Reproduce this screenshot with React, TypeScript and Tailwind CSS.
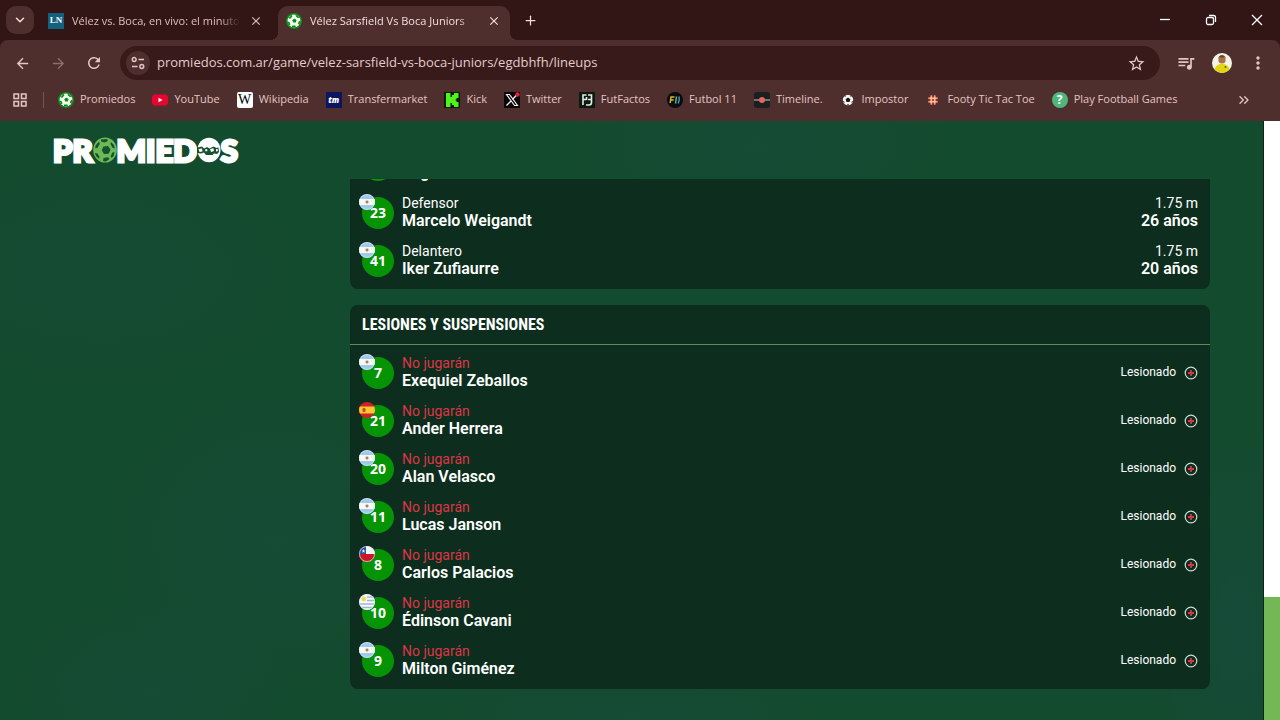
import type { ReactNode } from "react";
import {
  MdArrowBack,
  MdArrowForward,
  MdClose,
  MdMoreVert,
  MdOutlineGridView,
  MdQueueMusic,
  MdRefresh,
  MdStarBorder,
} from "react-icons/md";
import { ChevronDown, ChevronsRight, Plus } from "lucide-react";

type Flag = "ar" | "es" | "cl" | "uy";

interface Player {
  number: number;
  flag: Flag;
  name: string;
}

const substitutes: (Player & { role: string; height: string; age: string })[] = [
  { number: 16, flag: "uy", role: "Delantero", name: "Miguel Merentiel", height: "", age: "" },
  { number: 23, flag: "ar", role: "Defensor", name: "Marcelo Weigandt", height: "1.75 m", age: "26 años" },
  { number: 41, flag: "ar", role: "Delantero", name: "Iker Zufiaurre", height: "1.75 m", age: "20 años" },
];

const injured: Player[] = [
  { number: 7, flag: "ar", name: "Exequiel Zeballos" },
  { number: 21, flag: "es", name: "Ander Herrera" },
  { number: 20, flag: "ar", name: "Alan Velasco" },
  { number: 11, flag: "ar", name: "Lucas Janson" },
  { number: 8, flag: "cl", name: "Carlos Palacios" },
  { number: 10, flag: "uy", name: "Édinson Cavani" },
  { number: 9, flag: "ar", name: "Milton Giménez" },
];

function BallIcon() {
  return (
    <svg viewBox="0 0 16 16" className="size-4 shrink-0" aria-hidden="true">
      <circle cx="8" cy="8" r="8" fill="#11881c" />
      <circle cx="8" cy="8" r="6.4" fill="#f4fff2" />
      <path d="M8.400 5.600 10.600 7 9.800 9.500 7.200 9.600 6.200 7.200Z" fill="#11881c" />
      <path d="M2.600 5 5.800 1.800 6.400 3.600 4 6ZM9.600 1.600l3.800 2.600-1.200 1L9.800 3.600ZM14.600 7.600l-1.200 4.200-1.600-1 1-2.600ZM6 12.400l3.400.1.600 2-4 .1ZM1.500 8.400l2 .6 1 2.600-1.400 1Z" fill="#11881c" />
    </svg>
  );
}

function FlagIcon({ flag }: { flag: Flag }) {
  return (
    <svg viewBox="0 0 16 16" className="size-4 overflow-hidden rounded-full" aria-hidden="true">
      {flag === "ar" && (
        <>
          <rect width="16" height="16" fill="#9fcbea" />
          <rect y="5" width="16" height="6" fill="#f8f8f8" />
          <circle cx="8" cy="8" r="1.7" fill="#c9a66b" />
          <circle cx="8" cy="8" r="0.8" fill="#6b5b4a" />
        </>
      )}
      {flag === "es" && (
        <>
          <rect width="16" height="16" fill="#d0202c" />
          <rect y="4.5" width="16" height="7" fill="#fcc62e" />
          <rect x="3.5" y="6" width="3" height="4" rx="1" fill="#b5532b" />
        </>
      )}
      {flag === "cl" && (
        <>
          <rect width="16" height="16" fill="#f6f6f6" />
          <rect y="8" width="16" height="8" fill="#c8182a" />
          <rect width="7" height="8" fill="#24529b" />
          <path d="m4.500 3 .5 1.400h1.400L5.300 5.300l.4 1.400-1.200-.8-1.200.8.4-1.400L2.600 4.400H4Z" fill="#fff" />
        </>
      )}
      {flag === "uy" && (
        <>
          <rect width="16" height="16" fill="#f6f8fa" />
          <path d="M8 3h8M8 6.500h8M0 10h16M0 13.500h16" stroke="#9cb8d8" strokeWidth="1.500" />
          <circle cx="4.800" cy="5" r="2.400" fill="#f0d95a" />
        </>
      )}
      {flag !== "es" && (
        <circle cx="8" cy="8" r="7.500" fill="none" stroke="#e9eef2" strokeWidth="0.8" opacity="0.8" />
      )}
    </svg>
  );
}

function InjuryIcon() {
  return (
    <svg viewBox="0 0 14 14" className="size-3.5 translate-y-px" aria-hidden="true">
      <circle cx="7" cy="7" r="5.800" fill="none" stroke="#d3dad0" strokeWidth="1.200" />
      <path d="M7 4v6M4 7h6" stroke="#dc3545" strokeWidth="1.800" />
    </svg>
  );
}

function Logo() {
  return (
    <a
      href="#inicio"
      aria-label="Promiedos"
      className="flex h-7 items-center font-['Lato',sans-serif] text-[31px] leading-7 font-black text-white [-webkit-text-stroke:3px_white]"
    >
      <span>PR</span>
      <svg viewBox="0 0 24 26" className="h-[26px] w-6" aria-hidden="true">
        <ellipse cx="12" cy="13" rx="11.800" ry="12.600" fill="#6db955" />
        <g fill="#17512f">
          <path d="m10.500 9.500 4.500-.5 2.500 3.500-1.800 4.200-4.700.3-2.300-3.700Z" />
          <path d="m8 2.500 6-.5 1 2-3.500 1.500L8 4.500ZM18 5l3 3 .8 3.500-2.300-.8L17.500 7ZM2.500 8.500l3.500-4 .8 2.500-2.500 4-2 .5ZM2 16l2.500.5 2 3.500-.5 1.800L3 19ZM10.500 21l4.500-.8 1.500 1.800-3.500 2.500-3-.5ZM21.500 15l-1 4.500-2.200 1.200-.6-1.700 1.800-3.500Z" />
        </g>
      </svg>
      <span>MIED</span>
      <svg viewBox="0 0 24 26" className="h-[26px] w-6" aria-hidden="true">
        <ellipse cx="12" cy="13" rx="11.500" ry="12.200" fill="#fff" />
        <path d="M0 10.500l5-1 2 2 3-1.500 2.500 1.500 4-2 3 1.500 2-.5.5 4.500-2 2-3-.5-1.500 1.500H9L7 15.500l-3 1-4-.5Z" fill="#17512f" />
        <path d="m1.500 12 3.500-.5.500 3-3 .5ZM13 12l3.500-.8.500 2.800-3 1ZM19 12l2 .2-.3 2-1.700.4ZM8 12.500l2-.5.5 2-2 .5Z" fill="#fff" />
      </svg>
      <span>S</span>
    </a>
  );
}

const bookmarks: { label: string; icon: ReactNode }[] = [
  { label: "Promiedos", icon: <BallIcon /> },
  {
    label: "YouTube",
    icon: (
      <svg viewBox="0 0 16 16" className="size-4" aria-hidden="true">
        <rect y="2.500" width="16" height="11" rx="3" fill="#e8052f" />
        <path d="m6.500 5.700 4 2.300-4 2.300Z" fill="#fff" />
      </svg>
    ),
  },
  {
    label: "Wikipedia",
    icon: (
      <span className="flex size-4 items-center justify-center rounded-xs bg-white font-['Liberation_Serif',serif] text-sm leading-4 text-black">
        W
      </span>
    ),
  },
  {
    label: "Transfermarket",
    icon: (
      <span className="flex size-4 items-center justify-center bg-[#0b1560] font-['Open_Sans',sans-serif] text-[8px] leading-none font-extrabold text-white italic">
        tm
      </span>
    ),
  },
  {
    label: "Kick",
    icon: (
      <svg viewBox="0 0 16 16" className="size-4" aria-hidden="true">
        <rect width="16" height="16" fill="#0b1a08" />
        <path d="M2 1h4.500v4H8V3h2V1h4.500v5h-2v1.500h-1v1h1V10h2v5H10v-2H8v-2H6.500v4H2Z" fill="#4ff41c" />
      </svg>
    ),
  },
  {
    label: "Twitter",
    icon: (
      <svg viewBox="0 0 16 16" className="size-4" aria-hidden="true">
        <rect width="16" height="16" fill="#080606" />
        <path d="M2.500 2.500h3l8 11h-3Z" fill="none" stroke="#f2eeee" strokeWidth="1.200" />
        <path d="m13 2.500-4.500 5M7 9l-4.500 4.500" stroke="#f2eeee" strokeWidth="1.300" />
        <circle cx="13.500" cy="2.500" r="2.200" fill="#e01f3d" />
      </svg>
    ),
  },
  {
    label: "FutFactos",
    icon: (
      <svg viewBox="0 0 16 16" className="size-4" aria-hidden="true">
        <rect width="16" height="16" fill="#0d1a12" />
        <path d="M7.500 3H4v10M4 7.500h3.500M9 3h3.500v7.500c0 2-1 2.500-2.500 2.500H7M9 7.500h3.500M7.500 5v3" fill="none" stroke="#e4ece4" strokeWidth="1.600" />
      </svg>
    ),
  },
  {
    label: "Futbol 11",
    icon: (
      <svg viewBox="0 0 16 16" className="size-4" aria-hidden="true">
        <circle cx="8" cy="8" r="8" fill="#0c0c0c" />
        <path d="M7.500 5H4l-.8 6M3.700 8h3" fill="none" stroke="#d8b23a" strokeWidth="1.500" />
        <path d="m9.500 4.500-1 7" stroke="#63b96a" strokeWidth="1.500" />
        <path d="M12 4.500c.6 3 .2 5-.8 7" fill="none" stroke="#3f94cf" strokeWidth="1.500" />
      </svg>
    ),
  },
  {
    label: "Timeline.",
    icon: (
      <svg viewBox="0 0 16 16" className="size-4" aria-hidden="true">
        <rect width="16" height="16" rx="2.500" fill="#1c1f20" />
        <path d="M0 8h16" stroke="#c9c9c9" />
        <circle cx="8" cy="8" r="3" fill="#e7665a" />
      </svg>
    ),
  },
  {
    label: "Impostor",
    icon: (
      <svg viewBox="0 0 16 16" className="size-4" aria-hidden="true">
        <circle cx="8" cy="8" r="5.200" fill="#f8f4f2" />
        <path d="m8 5.600 2.400 1.700-.9 2.700h-3L5.600 7.300Z" fill="#1d1716" />
        <path d="m4 4.500 1.700-1 .3 1ZM12 4.500l-1.700-1-.3 1ZM2.900 9.500l1.200-.4.400 1.800ZM13.100 9.500l-1.200-.4-.4 1.800ZM6.800 13l1.200-.9 1.200.9Z" fill="#1d1716" />
      </svg>
    ),
  },
  {
    label: "Footy Tic Tac Toe",
    icon: (
      <svg viewBox="0 0 16 16" className="size-4" aria-hidden="true">
        <path d="M6.300 4v8M9.700 4v8M4 6.300h8M4 9.700h8" stroke="#f47a66" strokeWidth="2" strokeLinecap="round" />
        <path d="M6.300 4.500v7M9.700 4.500v7M4.500 6.300h7M4.500 9.700h7" stroke="#ffd9a8" strokeWidth="0.8" />
      </svg>
    ),
  },
  {
    label: "Play Football Games",
    icon: (
      <span className="flex size-4 items-center justify-center rounded-full bg-[#50b67b] font-['Open_Sans',sans-serif] text-xs leading-4 font-bold text-white">
        ?
      </span>
    ),
  },
];

function Tab({ title, icon, active }: { title: string; icon: ReactNode; active?: boolean }) {
  return (
    <div
      className={
        active
          ? "relative flex h-[34px] w-[232px] items-center gap-2 rounded-t-[10px] bg-[#4f2f2e] px-2 pb-1 text-[#f3dddb]"
          : "flex h-[34px] w-[232px] items-center gap-2 px-2 pb-1 text-[#dcc0be]"
      }
    >
      {active && (
        <>
          <span className="absolute bottom-0 -left-2 size-2 bg-[radial-gradient(circle_at_0_0,transparent_8px,#4f2f2e_8px)]" />
          <span className="absolute -right-2 bottom-0 size-2 bg-[radial-gradient(circle_at_100%_0,transparent_8px,#4f2f2e_8px)]" />
        </>
      )}
      {icon}
      <button
        type="button"
        className="min-w-0 flex-1 overflow-hidden text-left text-[11px] leading-4 whitespace-nowrap [mask-image:linear-gradient(to_right,black_88%,transparent)]"
      >
        {title}
      </button>
      <button type="button" aria-label={"Cerrar " + title} className="flex size-4 items-center justify-center">
        <MdClose size={14} />
      </button>
    </div>
  );
}

function BrowserChrome() {
  return (
    <header className="shrink-0 bg-[#321515] font-['Open_Sans','Noto_Sans',sans-serif]">
      <div className="flex h-10 items-end justify-between">
        <div className="flex items-end gap-1.5 pl-1.5">
          <button
            type="button"
            aria-label="Buscar pestañas"
            className="mb-1.5 flex size-7 items-center justify-center rounded-[10px] bg-[#4f2f2e] text-[#f3dddb]"
          >
            <ChevronDown size={14} strokeWidth={2.500} />
          </button>
          <Tab
            title="Vélez vs. Boca, en vivo: el minuto"
            icon={
              <span className="flex size-4 shrink-0 items-center justify-center bg-[#14617f] font-['Liberation_Serif',serif] text-[9px] font-bold text-white">
                LN
              </span>
            }
          />
          <Tab active title="Vélez Sarsfield Vs Boca Juniors" icon={<BallIcon />} />
          <button
            type="button"
            aria-label="Nueva pestaña"
            className="mb-1.5 flex size-7 items-center justify-center text-[#f3dddb]"
          >
            <Plus size={15} />
          </button>
        </div>
        <div className="flex h-full text-white">
          <button type="button" aria-label="Minimizar" className="flex w-[46px] items-center justify-center">
            <svg viewBox="0 0 12 12" className="size-3" aria-hidden="true">
              <path d="M1 5.500h10" stroke="currentColor" strokeWidth="1.300" />
            </svg>
          </button>
          <button type="button" aria-label="Restaurar" className="flex w-[46px] items-center justify-center">
            <svg viewBox="0 0 12 12" className="size-3" fill="none" stroke="currentColor" strokeWidth="1.300" aria-hidden="true">
              <rect x="1.500" y="3.500" width="7" height="7" rx="1.500" />
              <path d="M4 1.500h4.500a2 2 0 0 1 2 2V8" />
            </svg>
          </button>
          <button type="button" aria-label="Cerrar ventana" className="flex w-[46px] items-center justify-center">
            <svg viewBox="0 0 12 12" className="size-3" aria-hidden="true">
              <path d="m1 1 10 10M11 1 1 11" stroke="currentColor" strokeWidth="1.300" />
            </svg>
          </button>
        </div>
      </div>

      <div className="rounded-t-lg bg-[#4f2f2e] pb-2 text-[#e3c5c2]">
        <div className="flex h-[46px] items-center px-1">
          <button type="button" aria-label="Atrás" className="flex w-9 justify-center">
            <MdArrowBack size={17} />
          </button>
          <button type="button" aria-label="Adelante" disabled className="flex w-9 justify-center text-[#8d6c6a]">
            <MdArrowForward size={17} />
          </button>
          <button type="button" aria-label="Recargar" className="flex w-9 justify-center">
            <MdRefresh size={18} />
          </button>
          <div className="mx-2 flex h-[34px] flex-1 items-center rounded-full bg-[#381a1a] pr-3.5 pl-1.5">
            <button
              type="button"
              aria-label="Información del sitio"
              className="flex size-6 items-center justify-center rounded-full bg-[#4f2f2e]"
            >
              <svg viewBox="0 0 14 14" className="size-3.5" fill="none" stroke="currentColor" strokeWidth="1.500" aria-hidden="true">
                <circle cx="3.200" cy="3.500" r="1.900" />
                <path d="M7.500 3.500H13M1 10.500h5.500" />
                <circle cx="10.800" cy="10.500" r="1.900" />
              </svg>
            </button>
            <input
              type="text"
              aria-label="Dirección"
              defaultValue="promiedos.com.ar/game/velez-sarsfield-vs-boca-juniors/egdbhfh/lineups"
              className="ml-[7px] min-w-0 flex-1 bg-transparent text-[13px] text-[#e2cccb] outline-none"
            />
            <button type="button" aria-label="Agregar a marcadores">
              <MdStarBorder size={19} />
            </button>
          </div>
          <button type="button" aria-label="Controlar contenido multimedia" className="flex w-9 justify-center">
            <MdQueueMusic size={20} />
          </button>
          <button type="button" aria-label="Perfil" className="flex w-9 justify-center">
            <svg viewBox="0 0 20 20" className="size-5 rounded-full" aria-hidden="true">
              <rect width="20" height="20" fill="#f5f2e6" />
              <path d="M2 20c0-5 2-8 6-9h4c4 1 6 4 6 9Z" fill="#e3d512" />
              <circle cx="10" cy="7" r="3.600" fill="#a8724b" />
              <path d="M6.300 6c0-3 2-4 3.700-4s3.700 1 3.700 4l-1-1.500H7.300Z" fill="#6b4426" />
              <circle cx="13.500" cy="14" r="1" fill="#4d6b2a" />
            </svg>
          </button>
          <button type="button" aria-label="Menú" className="flex w-9 justify-center">
            <MdMoreVert size={20} />
          </button>
        </div>

        <nav aria-label="Marcadores" className="flex h-[27px] items-center pr-7 pl-[11px] text-[11px]">
          <button type="button" aria-label="Aplicaciones">
            <MdOutlineGridView size={18} />
          </button>
          <span className="mr-3.5 ml-3.5 h-4 w-px bg-[#755453]" />
          <div className="flex flex-1 items-center gap-[17px]">
            {bookmarks.map((b) => (
              <a key={b.label} href="#marcador" className="flex items-center gap-1.5 whitespace-nowrap">
                {b.icon}
                {b.label}
              </a>
            ))}
          </div>
          <button type="button" aria-label="Más marcadores">
            <ChevronsRight size={16} />
          </button>
        </nav>
      </div>
    </header>
  );
}

function PlayerRow({
  player,
  label,
  labelClass,
  children,
}: {
  player: Player;
  label: string;
  labelClass: string;
  children: ReactNode;
}) {
  return (
    <li className="flex h-12 items-center px-3 text-white">
      <div className="relative flex size-8 shrink-0 items-center justify-center rounded-full bg-[#079404] font-['Noto_Sans',sans-serif] text-sm font-bold">
        {player.number}
        <span className="absolute -top-[3px] -left-[3px]">
          <FlagIcon flag={player.flag} />
        </span>
      </div>
      <div className="ml-2 flex-1 pb-1">
        <p className={labelClass}>{label}</p>
        <p className="text-base leading-[17px] font-semibold">{player.name}</p>
      </div>
      {children}
    </li>
  );
}

export default function App() {
  return (
    <div className="flex h-screen flex-col overflow-hidden">
      <BrowserChrome />
      <div className="flex min-h-0 flex-1">
        <main className="flex min-w-0 flex-1 flex-col border-r border-[#0a2618] bg-[#134b2e] bg-[radial-gradient(ellipse_220px_120px_at_8%_25%,#174b3799,transparent),radial-gradient(ellipse_180px_160px_at_22%_70%,#174a3a99,transparent),radial-gradient(ellipse_200px_90px_at_60%_4%,#174a3a99,transparent),radial-gradient(ellipse_90px_200px_at_98%_85%,#164a3ccc,transparent),radial-gradient(ellipse_140px_90px_at_12%_95%,#174a3a99,transparent),radial-gradient(ellipse_200px_60px_at_50%_99%,#174a3a99,transparent)] font-['Roboto',sans-serif]">
          <div className="flex h-[58px] shrink-0 items-center px-[53px]">
            <Logo />
          </div>
          <div className="min-h-0 flex-1 overflow-hidden pr-[53px] pl-[54px]">
            <div className="-mt-[42px] ml-[296px] flex flex-col gap-4">
              <section className="rounded-lg bg-[#0d2e1e] py-1">
                <ul>
                  {substitutes.map((p) => (
                    <PlayerRow key={p.number} player={p} label={p.role} labelClass="text-sm leading-[18px]">
                      <div className="pb-1 text-right">
                        <p className="text-sm leading-[18px]">{p.height}</p>
                        <p className="text-base leading-[17px] font-semibold">{p.age}</p>
                      </div>
                    </PlayerRow>
                  ))}
                </ul>
              </section>
              <section className="rounded-lg bg-[#0d2e1e] pb-1">
                <h2 className="border-b border-[#5c8a5c] px-3 font-['Roboto_Condensed','Liberation_Sans_Narrow',sans-serif] text-base leading-[39px] font-bold text-white">
                  LESIONES Y SUSPENSIONES
                </h2>
                <ul className="pt-1">
                  {injured.map((p) => (
                    <PlayerRow
                      key={p.number}
                      player={p}
                      label="No jugarán"
                      labelClass="text-sm leading-[18px] text-[#dc3545]"
                    >
                      <div className="flex items-center gap-2 pb-0.5 text-xs">
                        Lesionado
                        <InjuryIcon />
                      </div>
                    </PlayerRow>
                  ))}
                </ul>
              </section>
            </div>
          </div>
        </main>
        <div className="flex w-4 flex-col bg-white">
          <div className="flex-[476]" />
          <div className="flex-[123] bg-[#73b757]" />
        </div>
      </div>
    </div>
  );
}
